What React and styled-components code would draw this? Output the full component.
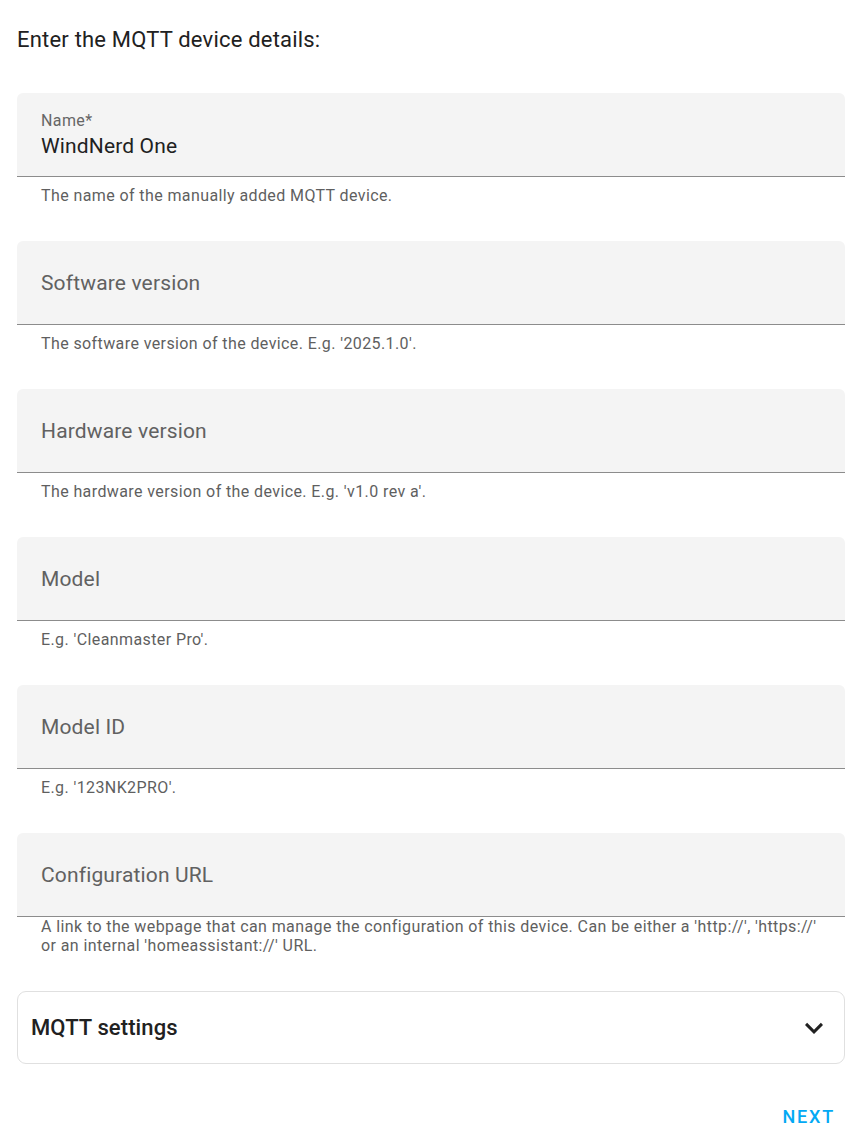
import React from "react";
import styled, { createGlobalStyle } from "styled-components";

const Global = createGlobalStyle`
  html, body { margin: 0; padding: 0; background: #fff; }
  body { font-family: Roboto, "Noto Sans", sans-serif; -webkit-font-smoothing: antialiased; }
`;

const Page = styled.div`
  padding: 25px 19px 0 17px;
  box-sizing: border-box;
  width: 864px;
`;

const Intro = styled.p`
  margin: 0 0 38px 0;
  font-size: 22px;
  line-height: 30px;
  color: #212121;
  letter-spacing: 0.2px;
`;

const FieldList = styled.div`
  display: flex;
  flex-direction: column;
`;

const FieldBlock = styled.div`
  display: flex;
  flex-direction: column;
  margin-bottom: ${(p) => p.$gap}px;
`;

const FieldBox = styled.div`
  height: 84px;
  box-sizing: border-box;
  background: #f4f4f4;
  border-radius: 6px 6px 0 0;
  border-bottom: 1px solid #8c8c8c;
  display: flex;
  flex-direction: column;
  justify-content: center;
  padding: 0 24px;
`;

const FloatLabel = styled.div`
  margin-top: 2px;
  font-size: 16px;
  line-height: 19px;
  color: #666;
  letter-spacing: 0.4px;
`;

const Value = styled.div`
  margin-top: 2px;
  font-size: 21px;
  line-height: 28px;
  color: #212121;
  letter-spacing: 0.15px;
`;

const Placeholder = styled.div`
  font-size: 21px;
  line-height: 28px;
  color: #616161;
  letter-spacing: 0.15px;
`;

const Helper = styled.div`
  padding: ${(p) => (p.$multi ? "0" : "9px")} 24px 0 24px;
  font-size: 16px;
  line-height: ${(p) => (p.$multi ? "19px" : "20px")};
  color: #5f5f5f;
  letter-spacing: 0.4px;
`;

const Panel = styled.div`
  margin-top: 36px;
  border: 1px solid #e0e0e0;
  border-radius: 9px;
  height: 73px;
  box-sizing: border-box;
  display: flex;
  align-items: center;
  justify-content: space-between;
  padding: 0 12px 0 13px;
`;

const PanelTitle = styled.div`
  font-size: 22px;
  font-weight: 500;
  color: #212121;
  letter-spacing: 0.1px;
`;

const Footer = styled.div`
  display: flex;
  justify-content: flex-end;
  padding: 42px 10px 0 0;
`;

const NextButton = styled.button`
  border: none;
  background: none;
  font-family: Roboto, sans-serif;
  font-size: 18px;
  font-weight: 500;
  letter-spacing: 1.8px;
  color: #03a9f4;
  padding: 0;
  cursor: pointer;
`;

const fields = [
  { label: "Name*", value: "WindNerd One", helper: "The name of the manually added MQTT device." },
  { label: "Software version", helper: "The software version of the device. E.g. '2025.1.0'." },
  { label: "Hardware version", helper: "The hardware version of the device. E.g. 'v1.0 rev a'." },
  { label: "Model", helper: "E.g. 'Cleanmaster Pro'." },
  { label: "Model ID", helper: "E.g. '123NK2PRO'." },
  {
    label: "Configuration URL",
    multi: true,
    helper:
      "A link to the webpage that can manage the configuration of this device. Can be either a 'http://', 'https://' or an internal 'homeassistant://' URL.",
  },
];

function Chevron() {
  return (
    <svg width="36" height="36" viewBox="0 0 24 24">
      <path d="M7.41 8.58L12 13.17l4.59-4.59L18 10l-6 6-6-6 1.41-1.42z" fill="#212121" />
    </svg>
  );
}

export default function App() {
  return (
    <Page>
      <Global />
      <Intro>Enter the MQTT device details:</Intro>
      <FieldList>
        {fields.map((f, i) => (
          <FieldBlock key={f.label} $gap={i === fields.length - 1 ? 0 : 35}>
            <FieldBox>
              {f.value ? (
                <>
                  <FloatLabel>{f.label}</FloatLabel>
                  <Value>{f.value}</Value>
                </>
              ) : (
                <Placeholder>{f.label}</Placeholder>
              )}
            </FieldBox>
            <Helper $multi={f.multi}>{f.helper}</Helper>
          </FieldBlock>
        ))}
      </FieldList>
      <Panel>
        <PanelTitle>MQTT settings</PanelTitle>
        <Chevron />
      </Panel>
      <Footer>
        <NextButton>NEXT</NextButton>
      </Footer>
    </Page>
  );
}
